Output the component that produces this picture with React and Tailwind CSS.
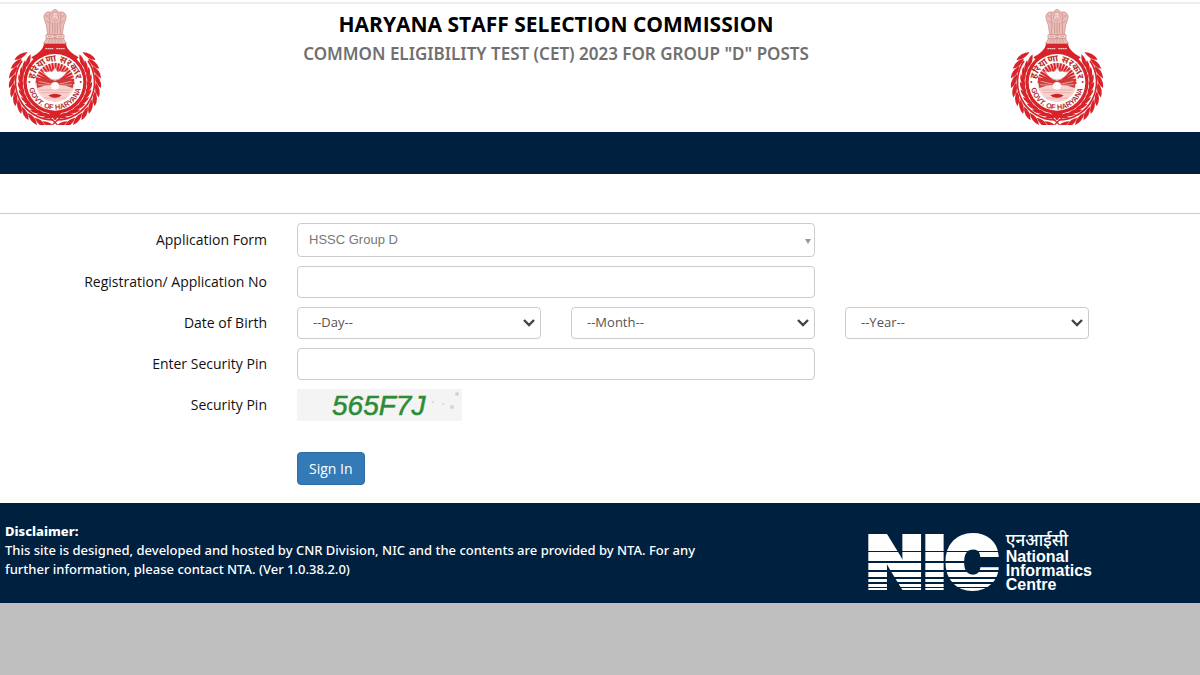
import React, { useState } from "react";

const days = Array.from({ length: 31 }, (_, i) => i + 1);
const months = [
  "January",
  "February",
  "March",
  "April",
  "May",
  "June",
  "July",
  "August",
  "September",
  "October",
  "November",
  "December",
];
const years = Array.from({ length: 60 }, (_, i) => 2008 - i);

// leaf positions along the left half of the wreath, bottom to top
const leaves = Array.from({ length: 11 }, (_, i) => 99 + i * 12);
const rays = Array.from({ length: 19 }, (_, i) => 182 + i * 10);

const Wreath = () => (
  <g fill="#d8232a">
    <path d="M160 360 A114 114 0 0 1 66 182" fill="none" stroke="#d8232a" strokeWidth="5" />
    {leaves.map((deg) => (
      <g key={deg} transform={`rotate(${deg} 165 247)`}>
        <path d="M0 -26 Q13 -4 0 20 Q-13 -4 0 -26Z" transform="translate(293 247) rotate(20)" />
        <path d="M0 -24 Q12 -3 0 18 Q-12 -3 0 -24Z" transform="translate(269 249) rotate(-20)" />
      </g>
    ))}
  </g>
);

const Emblem = ({ id }) => (
  <svg viewBox="24 27 282 348" className="h-[116px] w-[94px] shrink-0" role="img" aria-label="Government of Haryana">
    <defs>
      <path id={`${id}-top`} d="M102 248 A63 63 0 0 1 228 248" />
      <path id={`${id}-bottom`} d="M86 250 A79 79 0 0 0 244 250" />
    </defs>
    {/* lion capital */}
    <g fill="#e9bdb9" stroke="#c98783" strokeWidth="2">
      <path d="M133 58 Q128 42 142 36 L155 36 Q165 20 175 36 L188 36 Q202 42 197 58 L191 76 L187 104 H143 L139 76Z" />
      <path d="M150 38 Q144 52 150 66 L148 102 M180 38 Q186 52 180 66 L182 102" fill="none" />
      <path d="M157 40 Q165 32 173 40 L175 56 Q165 66 155 56Z" fill="#f1d3d0" />
      <path d="M158 68 V100 M165 66 V100 M172 68 V100 M139 62 L150 70 M191 62 L180 70 M160 47 H163 M167 47 H170 M161 55 H169 M137 48 H144 M186 48 H193" fill="none" />
      <path d="M138 104 H192 V115 H138Z" fill="#f1d3d0" />
      <circle cx="165" cy="109" r="4" fill="none" />
      <path d="M144 109 H155 M175 109 H186" fill="none" />
      <path d="M139 116 H191 L200 132 H130Z" />
      <path d="M145 128 L149 118 M155 128 L157 118 M165 128 V118 M175 128 L173 118 M185 128 L181 118" fill="none" />
    </g>
    <Wreath />
    <g transform="translate(330 0) scale(-1 1)">
      <Wreath />
    </g>
    <path d="M140 330 H190 L165 362Z" fill="#d8232a" />
    <path d="M150 353 L172 374 M180 353 L158 374" stroke="#d8232a" strokeWidth="4" />
    {/* collar and ring */}
    <path d="M133 131 H197 Q203 155 236 172 L214 194 H116 L94 172 Q127 155 133 131Z" fill="#d8232a" />
    <path d="M136 146 H161 M169 146 H195" stroke="#f4c9c5" strokeWidth="4" strokeDasharray="5 1" />
    <circle cx="165" cy="247" r="95" fill="#d8232a" />
    <circle cx="165" cy="247" r="85" fill="#fff" />
    <circle cx="165" cy="247" r="59" fill="#f6d3cf" />
    <g stroke="#d8232a" strokeWidth="6">
      {rays.map((deg) => (
        <path key={deg} d="M185 247 H223" transform={`rotate(${deg} 165 247)`} />
      ))}
    </g>
    <path d="M108 238 Q135 228 165 242 Q195 228 222 238 L218 264 Q190 252 165 256 Q140 252 112 264Z" fill="#cf3a38" />
    <path d="M116 244 L160 254 M114 254 L150 256 M214 244 L170 254 M216 254 L180 256" stroke="#f6d3cf" strokeWidth="2" />
    <path d="M128 212 Q142 238 165 240 Q188 238 202 212 Q188 220 180 212 Q174 222 165 202 Q156 222 150 212 Q142 220 128 212Z" fill="#fff" stroke="#d98a86" strokeWidth="2" />
    <circle cx="165" cy="258" r="12" fill="#fff" />
    <path d="M118 270 H212 M124 278 H206 M132 294 H198" stroke="#e59d98" strokeWidth="2" />
    <path d="M145 286 Q165 276 185 286 Q178 294 165 293 Q152 294 145 286Z" fill="#c9252a" />
    <g fill="#b5322f" fontWeight="bold" textAnchor="middle">
      <text fontSize="28" fontFamily="'Noto Sans', 'Noto Sans Devanagari', sans-serif">
        <textPath href={`#${id}-top`} startOffset="50%">हरियाणा सरकार</textPath>
      </text>
      <text fontSize="22" fontFamily="'Liberation Sans', sans-serif">
        <textPath href={`#${id}-bottom`} startOffset="50%">GOVT. OF HARYANA</textPath>
      </text>
    </g>
    <circle cx="88" cy="246" r="3" fill="#b5322f" />
    <circle cx="242" cy="246" r="3" fill="#b5322f" />
  </svg>
);

const NicLogo = () => (
  <svg viewBox="0 0 130 56" className="h-[56px] w-[130px] shrink-0 overflow-visible" role="img" aria-label="NIC">
    <g fill="#fff" stroke="#fff" strokeWidth="4" fontFamily="Inter, sans-serif" fontWeight="900" fontSize="72">
      <text x="-1" y="54">N</text>
      <text x="56" y="54">I</text>
      <text x="77" y="54">C</text>
    </g>
    {/* stripes cut through the letters, denser at the bottom */}
    <g fill="#002040">
      <rect y="17" width="132" height="1" />
      <rect y="27" width="132" height="2" />
      <rect y="36" width="132" height="2" />
      <rect y="43" width="132" height="2" />
      <rect y="48" width="132" height="2" />
      <rect y="53" width="132" height="1" />
    </g>
  </svg>
);

const Captcha = () => (
  <svg viewBox="0 0 165 32" className="h-8 w-[165px]" role="img" aria-label="Security pin image">
    <rect width="165" height="32" fill="#f4f4f4" />
    <text x="35" y="26" fontFamily="'Liberation Sans', sans-serif" fontStyle="italic" fontSize="28" fill="#2e8b35" stroke="#2e8b35" strokeWidth="0.5">
      565F7J
    </text>
    <g fill="#d4d4d4">
      <circle cx="160" cy="5" r="2" />
      <circle cx="155" cy="18" r="2" />
      <circle cx="136" cy="13" r="1" />
      <circle cx="146" cy="15" r="1" />
    </g>
  </svg>
);

const labelClass = "px-[15px] text-right text-[14px] leading-5 font-medium text-[#111]";

const DateSelect = ({ label, options, value, onChange }) => (
  <div className="relative px-[15px]">
    <select
      aria-label={label}
      value={value}
      onChange={onChange}
      className="h-8 w-full appearance-none rounded border border-[#ccc] bg-white px-[15px] text-[#555]"
    >
      <option value="">--{label}--</option>
      {options.map((o) => (
        <option key={o}>{o}</option>
      ))}
    </select>
    <svg viewBox="0 0 12 8" className="pointer-events-none absolute top-3 right-[21px] h-2 w-3" aria-hidden="true">
      <path d="M1 1 L6 6 L11 1" fill="none" stroke="#444" strokeWidth="2.4" />
    </svg>
  </div>
);

const App = () => {
  const [form, setForm] = useState({ regNo: "", day: "", month: "", year: "", pin: "" });

  const update = (key) => (e) => setForm({ ...form, [key]: e.target.value });

  const submitHandler = (e) => {
    e.preventDefault();
  };

  const inputClass = "h-8 w-full rounded border border-[#ccc] bg-white px-3 text-[#555]";

  return (
    <div className="min-h-screen bg-[#bfbfbf] font-['Open_Sans',sans-serif] text-[13px]">
      <header className="bg-white pt-[2px]">
        <div className="border-t-2 border-[#eee]">
          <div className="flex h-32 w-full max-w-[1112px] items-start justify-between px-2 pt-[5px]">
            <Emblem id="left" />
            <div className="pt-[2px] text-center">
              <h1 className="text-[21px] leading-[26px] font-bold text-black">HARYANA STAFF SELECTION COMMISSION</h1>
              <h2 className="mt-[6px] font-['Noto_Sans',sans-serif] text-[17px] leading-[22px] font-semibold text-[#707070]">
                COMMON ELIGIBILITY TEST (CET) 2023 FOR GROUP "D" POSTS
              </h2>
            </div>
            <Emblem id="right" />
          </div>
        </div>
      </header>
      <nav className="h-[42px] bg-[#002040]" />

      <main className="bg-white pt-[39px]">
        <form onSubmit={submitHandler} className="border-t border-[#ccc] pt-[9px] pb-[18px]">
          <div className="grid w-full max-w-[1112px] grid-cols-4 items-center gap-y-[9px] px-2">
            <label htmlFor="appForm" className={labelClass}>Application Form</label>
            <div className="relative col-span-2 px-[15px]">
              <select
                id="appForm"
                className="h-[34px] w-full appearance-none rounded border border-[#ccc] bg-white px-[11px] font-['Liberation_Sans',sans-serif] text-[#777]"
              >
                <option>HSSC Group D</option>
              </select>
              <svg viewBox="0 0 6 5" className="pointer-events-none absolute top-4 right-[19px] h-[5px] w-[6px]" aria-hidden="true">
                <path d="M0 0 H6 L3 5Z" fill="#999" />
              </svg>
            </div>

            <label htmlFor="regNo" className={`col-start-1 ${labelClass}`}>Registration/ Application No</label>
            <div className="col-span-2 px-[15px]">
              <input id="regNo" type="text" value={form.regNo} onChange={update("regNo")} className={inputClass} />
            </div>

            <div className={`col-start-1 ${labelClass}`}>Date of Birth</div>
            <DateSelect label="Day" options={days} value={form.day} onChange={update("day")} />
            <DateSelect label="Month" options={months} value={form.month} onChange={update("month")} />
            <DateSelect label="Year" options={years} value={form.year} onChange={update("year")} />

            <label htmlFor="pin" className={labelClass}>Enter Security Pin</label>
            <div className="col-span-2 px-[15px]">
              <input id="pin" type="text" value={form.pin} onChange={update("pin")} className={inputClass} />
            </div>

            <div className={`col-start-1 ${labelClass}`}>Security Pin</div>
            <div className="col-span-2 px-[15px]">
              <Captcha />
            </div>

            <div className="col-span-2 col-start-2 px-[15px] pt-[22px]">
              <button
                type="submit"
                className="h-[33px] rounded border border-[#2e6da4] bg-[#337ab7] px-[11px] text-[14px] font-medium text-white"
              >
                Sign In
              </button>
            </div>
          </div>
        </form>
      </main>

      <footer className="bg-[#002040] text-white">
        <div className="flex h-[100px] w-full max-w-[1112px] items-start justify-between pr-[20px] pl-[5px]">
          <p className="w-2/3 max-w-[720px] pt-[19px] font-['Noto_Sans',sans-serif] leading-[19px] font-medium">
            <strong className="font-extrabold">Disclaimer:</strong>
            <br />
            This site is designed, developed and hosted by CNR Division, NIC and the contents are provided by NTA. For any
            further information, please contact NTA. (Ver 1.0.38.2.0)
          </p>
          <div className="flex gap-2 pt-[27px]">
            <div className="pt-1">
              <NicLogo />
            </div>
            <div className="font-['Liberation_Sans',sans-serif] text-[16px] leading-[14px] font-bold">
              <p className="font-['Noto_Sans',sans-serif] text-[17px] leading-5 font-medium">एनआईसी</p>
              <p>National</p>
              <p>Informatics</p>
              <p>Centre</p>
            </div>
          </div>
        </div>
      </footer>
    </div>
  );
};

export default App;
